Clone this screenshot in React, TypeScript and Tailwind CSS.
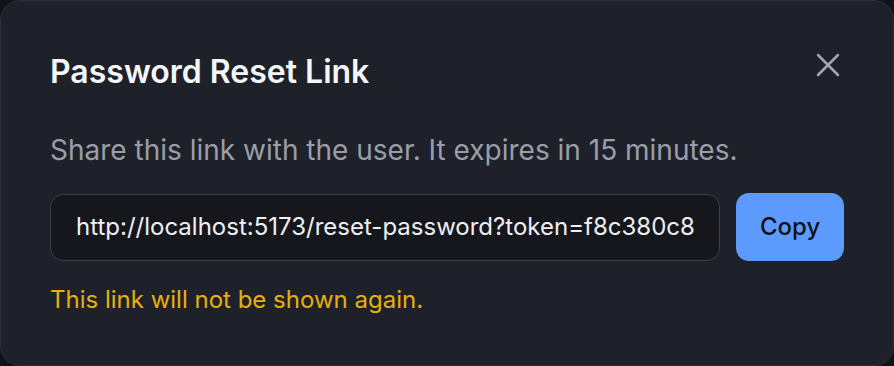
import { X } from "lucide-react";

export default function App() {
  const link = "http://localhost:5173/reset-password?token=f8c380c8";

  return (
    <div className="h-[366px] w-[894px] bg-[#111318] font-['Inter',sans-serif]">
      <div className="flex h-full flex-col rounded-[20px] border border-[#2c303a] bg-[#1e212a] px-[49px] pt-[52px]">
        <div className="flex items-start justify-between">
          <h2 className="text-[32px] font-semibold leading-[38px] text-[#f5f6f8]">
            Password Reset Link
          </h2>
          <button className="-mr-[4px] -mt-[8px] text-[#a3a6ae]">
            <X size={40} strokeWidth={1.5} />
          </button>
        </div>

        <p className="mt-[42px] text-[28px] leading-[34px] text-[#9a9ea8]">
          Share this link with the user. It expires in 15 minutes.
        </p>

        <div className="mt-[26px] flex items-center gap-[16px]">
          <div className="flex h-[67px] w-[671px] items-center overflow-hidden rounded-[13px] border border-[#3a3e48] bg-[#15171d] px-[25px]">
            <span className="whitespace-nowrap text-[24px] text-[#eef0f3]">{link}</span>
          </div>
          <button className="h-[68px] w-[108px] rounded-[13px] bg-[#5c9bfd] text-[24px] font-medium text-[#0e1116]">
            Copy
          </button>
        </div>

        <p className="mt-[24px] text-[24px] leading-[30px] text-[#e6b10c]">
          This link will not be shown again.
        </p>
      </div>
    </div>
  );
}
